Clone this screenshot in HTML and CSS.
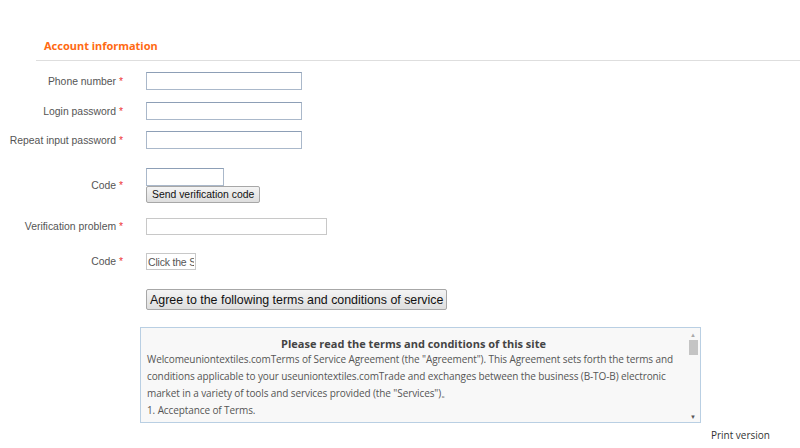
FILE: index.html
```html
<!DOCTYPE html>
<html lang="en">
<head>
    <meta charset="UTF-8">
    <meta name="viewport" content="width=device-width, initial-scale=1.0">
    <title>Register</title>
    <link rel="stylesheet" href="styles.css">
</head>
<body>
    <div class="section-head">
        <h3 class="section-title">Account information</h3>
    </div>
    <form class="reg-form" onsubmit="return false">
        <div class="form-row row-phone">
            <label class="form-label">Phone number <em>*</em></label>
            <input type="text" class="ipt">
        </div>
        <div class="form-row row-pass">
            <label class="form-label">Login password <em>*</em></label>
            <input type="password" class="ipt">
        </div>
        <div class="form-row row-repeat">
            <label class="form-label">Repeat input password <em>*</em></label>
            <input type="password" class="ipt">
        </div>
        <div class="form-row row-code">
            <label class="form-label">Code <em>*</em></label>
            <div class="code-box">
                <input type="text" class="ipt ipt-short">
                <button type="button" class="btn btn-small">Send verification code</button>
            </div>
        </div>
        <div class="form-row row-question">
            <label class="form-label">Verification problem <em>*</em></label>
            <input type="text" class="ipt ipt-wide ipt-gray">
        </div>
        <div class="form-row row-captcha">
            <label class="form-label">Code <em>*</em></label>
            <input type="text" class="ipt ipt-tiny ipt-gray" value="Click the Show">
        </div>
        <div class="form-row row-agree">
            <span class="form-label"></span>
            <button type="button" class="btn btn-big">Agree to the following terms and conditions of service</button>
        </div>
    </form>

    <div class="terms">
        <div class="terms-body">
            <h4 class="terms-title">Please read the terms and conditions of this site</h4>
            <p>Welcomeuniontextiles.comTerms of Service Agreement (the "Agreement"). This Agreement sets forth the terms and conditions applicable to your useuniontextiles.comTrade and exchanges between the business (B-TO-B) electronic market in a variety of tools and services provided (the "Services")。</p>
            <p>1. Acceptance of Terms.</p>
        </div>
        <div class="scrollbar">
            <span class="arrow">&#9650;</span>
            <span class="thumb"></span>
            <span class="track"></span>
            <span class="arrow">&#9660;</span>
        </div>
    </div>
    <div class="print-link"><a href="#">Print version</a></div>
</body>
</html>
```

FILE: styles.css
```css
body {
    margin: 0;
    font-family: 'Liberation Sans', sans-serif;
    font-size: 11px;
    color: #555;
    background: #fff;
}

.section-head {
    margin: 38px 0 0 36px;
    padding: 0 0 6px 8px;
    border-bottom: 1px solid #dedede;
}

.section-title {
    margin: 0;
    font-family: 'Noto Sans', 'Open Sans', sans-serif;
    font-size: 11px;
    line-height: 16px;
    font-weight: bold;
    color: #ff6a13;
}

.reg-form {
    margin-top: 11px;
}

.form-row {
    display: flex;
    align-items: center;
}

.form-label {
    width: 123px;
    margin-right: 23px;
    text-align: right;
    font-family: 'Liberation Sans', sans-serif;
    font-size: 10.4px;
    color: #555;
    flex-shrink: 0;
}

.form-label em {
    font-style: normal;
    color: #e33;
}

.row-pass { margin-top: 12px; }
.row-repeat { margin-top: 11px; }
.row-code { margin-top: 19px; }
.row-question { margin-top: 15px; }
.row-captcha { margin-top: 18px; }
.row-agree { margin-top: 19px; }

.ipt {
    width: 156px;
    height: 18px;
    padding: 0 3px;
    border: 1px solid #aab8ca;
    border-top-color: #8d9fb6;
    box-sizing: border-box;
    font-family: 'Liberation Sans', sans-serif;
    font-size: 11px;
    outline: none;
}

.ipt-short { width: 78px; display: block; }
.ipt-wide { width: 181px; height: 17px; }
.ipt-tiny { width: 50px; height: 17px; color: #555; padding: 0 1px; font-size: 10.5px; letter-spacing: -0.2px; }
.ipt-gray { border-color: #c8c8c8; }

.code-box {
    display: flex;
    flex-direction: column;
    align-items: flex-start;
}

.btn {
    font-family: 'Liberation Sans', sans-serif;
    color: #111;
    background: linear-gradient(#f4f4f4, #dedede);
    border: 1px solid #a7a7a7;
    border-radius: 2px;
    cursor: pointer;
    padding: 0 5px;
}

.btn-small {
    height: 17px;
    font-size: 10.4px;
    padding: 0 5px;
}

.btn-big {
    height: 21px;
    font-size: 12.4px;
    padding: 0 3px;
}

.terms {
    display: flex;
    width: 561px;
    height: 96px;
    margin: 17px 0 0 140px;
    border: 1px solid #b9cfe3;
    background: #f8f8f8;
    box-sizing: border-box;
    overflow: hidden;
}

.terms-body {
    flex: 1;
    padding: 7px 6px 0 6px;
    overflow: hidden;
    font-family: 'Open Sans', 'Noto Sans', sans-serif;
    font-size: 10px;
    letter-spacing: -0.1px;
    line-height: 17px;
    color: #555;
}

.terms-title {
    margin: 0 0 -1px;
    text-align: center;
    font-size: 11px;
    letter-spacing: 0;
    font-weight: bold;
    color: #444;
}

.terms-body p {
    margin: 0;
}

.scrollbar {
    display: flex;
    flex-direction: column;
    align-items: center;
    width: 14px;
    padding-top: 2px;
    background: #f8f8f8;
}

.scrollbar .arrow {
    font-size: 6px;
    line-height: 10px;
    color: #aaa;
}

.scrollbar .arrow:last-child {
    color: #555;
}

.scrollbar .thumb {
    width: 9px;
    height: 15px;
    background: #c4c4c4;
}

.scrollbar .track {
    flex: 1;
}

.print-link {
    width: 770px;
    margin-top: 5px;
    text-align: right;
}

.print-link a {
    font-family: 'Open Sans', 'Noto Sans', sans-serif;
    font-size: 10px;
    color: #333;
    text-decoration: none;
}
```
